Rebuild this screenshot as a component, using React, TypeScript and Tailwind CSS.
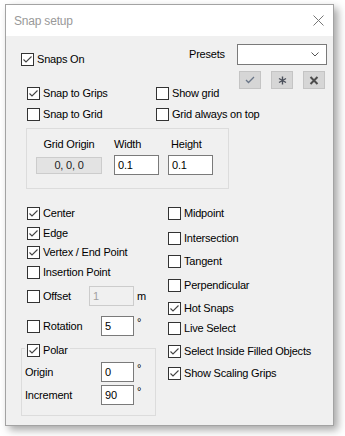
import clsx from "clsx";

type CheckProps = {
  label: string;
  checked?: boolean;
  className?: string;
};

const CheckBox = ({ label, checked, className }: CheckProps) => {
  return (
    <div className={clsx("flex h-[13px] items-center", className)}>
      <span className="flex h-[13px] w-[13px] shrink-0 items-center justify-center border border-[#333333] bg-white">
        {checked && (
          <svg width="11" height="11" viewBox="0 0 11 11">
            <path d="M1.5 5.5 L4 8 L9.5 2.5" stroke="#444" strokeWidth="1.1" fill="none" />
          </svg>
        )}
      </span>
      <span className="ml-[3px] whitespace-nowrap leading-[13px]">{label}</span>
    </div>
  );
};

const TextBox = ({ value, className }: { value: string; className?: string }) => (
  <div
    className={clsx(
      "flex h-[20px] items-center border border-[#7a7a7a] bg-white pl-[3px] leading-[13px]",
      className
    )}
  >
    {value}
  </div>
);

const Degree = () => <span className="ml-[3px] self-start leading-[12px]">°</span>;

const rightChecks = [
  { label: "Midpoint", checked: false, mt: "mt-0" },
  { label: "Intersection", checked: false, mt: "mt-[12px]" },
  { label: "Tangent", checked: false, mt: "mt-[10px]" },
  { label: "Perpendicular", checked: false, mt: "mt-[11px]" },
  { label: "Hot Snaps", checked: true, mt: "mt-[10px]" },
  { label: "Live Select", checked: false, mt: "mt-[7px]" },
  { label: "Select Inside Filled Objects", checked: true, mt: "mt-[10px]" },
  { label: "Show Scaling Grips", checked: true, mt: "mt-[9px]" },
];

export default function App() {
  return (
    <div className="h-[436px] w-[345px] bg-white pl-[5px] pt-[4px] font-['Liberation_Sans',Arial,sans-serif] text-[11px] tracking-[-0.2px] text-black">
      <div className="flex h-[422px] w-[329px] flex-col border border-[#a3a3a3] shadow-[4px_4px_8px_rgba(0,0,0,0.35)]">
        {/* title bar */}
        <div className="flex h-[31px] shrink-0 items-center justify-between bg-white pl-[8px] pr-[9px]">
          <span className="text-[12px] text-[#999999]">Snap setup</span>
          <svg width="11" height="11" viewBox="0 0 11 11">
            <path d="M0.5 0.5 L10.5 10.5 M10.5 0.5 L0.5 10.5" stroke="#777" strokeWidth="1" />
          </svg>
        </div>

        <div className="flex-1 bg-[#f0f0f0]">
          {/* snaps on + presets */}
          <div className="flex h-[34px] items-start">
            <CheckBox label="Snaps On" checked className="ml-[15px] mt-[17px]" />
            <div className="ml-auto mr-[6px] mt-[8px] flex items-center">
              <span className="w-[48px]">Presets</span>
              <div className="flex h-[21px] w-[90px] items-center justify-end border border-[#7a7a7a] bg-white pr-[7px]">
                <svg width="8" height="5" viewBox="0 0 8 5">
                  <path d="M0.5 0.5 L4 4 L7.5 0.5" stroke="#555" strokeWidth="1" fill="none" />
                </svg>
              </div>
            </div>
          </div>

          {/* snap to grips / show grid + preset buttons */}
          <div className="flex items-start">
            <div className="ml-[21px] mt-[17px] flex">
              <CheckBox label="Snap to Grips" checked className="w-[129px]" />
              <CheckBox label="Show grid" />
            </div>
            <div className="ml-auto mr-[8px] mt-[1px] flex gap-[10px]">
              <div className="flex h-[18px] w-[22px] items-center justify-center border border-[#c4c4c4] bg-[#d6d6d6]">
                <svg width="10" height="8" viewBox="0 0 10 8">
                  <path d="M1 4 L3.5 6.5 L9 1" stroke="#6a7688" strokeWidth="1.3" fill="none" />
                </svg>
              </div>
              <div className="flex h-[18px] w-[22px] items-center justify-center border border-[#c4c4c4] bg-[#d6d6d6]">
                <svg width="9" height="9" viewBox="0 0 9 9">
                  <path
                    d="M4.5 0.5 V8.5 M1 2.5 L8 6.5 M8 2.5 L1 6.5"
                    stroke="#4a4f5a"
                    strokeWidth="1.4"
                    fill="none"
                  />
                </svg>
              </div>
              <div className="flex h-[18px] w-[22px] items-center justify-center border border-[#c4c4c4] bg-[#d6d6d6]">
                <svg width="10" height="9" viewBox="0 0 10 9">
                  <path d="M1.5 1 L8.5 8 M8.5 1 L1.5 8" stroke="#4d4d4d" strokeWidth="2" fill="none" />
                </svg>
              </div>
            </div>
          </div>

          <div className="ml-[21px] mt-[8px] flex">
            <CheckBox label="Snap to Grid" className="w-[129px]" />
            <CheckBox label="Grid always on top" />
          </div>

          {/* grid box */}
          <div className="ml-[20px] mt-[7px] flex h-[61px] w-[203px] border border-[#dcdcdc] pl-[9px] pt-[8px]">
            <div className="flex w-[66px] flex-col">
              <span className="h-[14px] text-center leading-[14px]">Grid Origin</span>
              <div className="mt-[6px] flex h-[17px] items-center justify-center border border-[#cccccc] bg-[#e3e3e3] text-[#222]">
                0, 0, 0
              </div>
            </div>
            <div className="ml-[12px] flex w-[45px] flex-col">
              <span className="h-[14px] leading-[14px]">Width</span>
              <TextBox value="0.1" className="mt-[4px]" />
            </div>
            <div className="ml-[9px] flex w-[45px] flex-col">
              <span className="h-[14px] pl-[3px] leading-[14px]">Height</span>
              <TextBox value="0.1" className="mt-[4px]" />
            </div>
          </div>

          {/* snap types */}
          <div className="mt-[18px] flex">
            <div className="ml-[21px] flex w-[141px] flex-col">
              <CheckBox label="Center" checked />
              <CheckBox label="Edge" checked className="mt-[7px]" />
              <CheckBox label="Vertex / End Point" checked className="mt-[6px]" />
              <CheckBox label="Insertion Point" className="mt-[7px]" />
              <div className="mt-[7px] flex h-[20px] items-center">
                <CheckBox label="Offset" className="w-[62px]" />
                <div className="flex h-[20px] w-[45px] items-center border border-[#cccccc] bg-[#f0f0f0] pl-[3px] text-[#a0a0a0]">
                  1
                </div>
                <span className="ml-[3px]">m</span>
              </div>
              <div className="mt-[10px] flex h-[20px] items-center">
                <CheckBox label="Rotation" className="w-[74px]" />
                <TextBox value="5" className="w-[33px]" />
                <Degree />
              </div>
              <fieldset className="-ml-[6px] mt-[3px] w-[135px] border border-[#dcdcdc] pb-[10px]">
                <legend className="ml-[3px] px-[2px]">
                  <div className="flex h-[18px] items-end">
                    <CheckBox label="Polar" checked />
                  </div>
                </legend>
                <div className="mt-[5px] flex h-[20px] items-center pl-[3px]">
                  <span className="w-[76px]">Origin</span>
                  <TextBox value="0" className="w-[33px]" />
                  <Degree />
                </div>
                <div className="mt-[3px] flex h-[20px] items-center pl-[3px]">
                  <span className="w-[76px]">Increment</span>
                  <TextBox value="90" className="w-[33px]" />
                  <Degree />
                </div>
              </fieldset>
            </div>
            <div className="flex flex-col">
              {rightChecks.map((c) => (
                <CheckBox key={c.label} label={c.label} checked={c.checked} className={c.mt} />
              ))}
            </div>
          </div>
        </div>
      </div>
    </div>
  );
}
